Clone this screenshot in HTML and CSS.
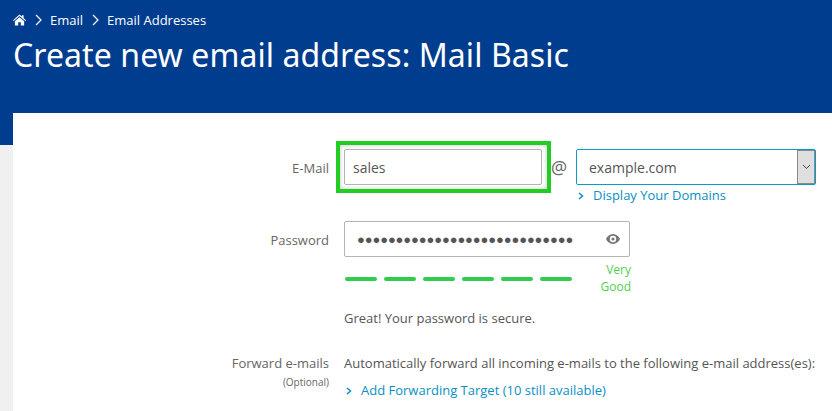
FILE: index.html
```html
<!DOCTYPE html>
<html lang="en">
<head>
  <meta charset="UTF-8" />
  <title>Create new email address: Mail Basic</title>
  <link rel="stylesheet" href="styles.css">
</head>
<body>

  <!-- blue page header -->
  <div class="header">
    <div class="crumbs">
      <svg class="home" viewBox="0 0 14 12" width="13" height="12"><path d="M7 0 L9.6 2.3 V1 H11.4 V3.9 L14 6.2 L13.2 7 L7 1.7 L0.8 7 L0 6.2 Z M2 7.3 L7 3 L12 7.3 V12 H8.4 V8.4 H5.6 V12 H2 Z" fill="#fff"/></svg>
      <svg class="sep" viewBox="0 0 7 12" width="7" height="12"><path d="M1 1 L6 6 L1 11" fill="none" stroke="#fff" stroke-width="1.2"/></svg>
      <span>Email</span>
      <svg class="sep" viewBox="0 0 7 12" width="7" height="12"><path d="M1 1 L6 6 L1 11" fill="none" stroke="#fff" stroke-width="1.2"/></svg>
      <span>Email Addresses</span>
    </div>
    <h1>Create new email address: Mail Basic</h1>
  </div>

  <div class="content">
    <div class="row row-email">
      <label class="lbl">E-Mail</label>
      <div class="email-fields">
        <div class="mail-wrap">
          <input class="input input-mail" type="text" value="sales" />
        </div>
        <span class="at">@</span>
        <div class="domain-col">
          <div class="select">
            <span class="select-text">example.com</span>
            <span class="select-btn">
              <svg viewBox="0 0 9 6" width="9" height="6"><path d="M1 1 L4.5 4.5 L8 1" fill="none" stroke="#444" stroke-width="1"/></svg>
            </span>
          </div>
          <a class="link link-domains" href="#"><svg class="chev" viewBox="0 0 6 8" width="6" height="8"><path d="M1 1 L4.5 4 L1 7" fill="none" stroke="#0a8fc4" stroke-width="1.5"/></svg>Display Your Domains</a>
        </div>
      </div>
    </div>

    <div class="row row-pass">
      <label class="lbl">Password</label>
      <div class="pass-col">
        <div class="input pass-box">
          <span class="dots">&#9679;&#9679;&#9679;&#9679;&#9679;&#9679;&#9679;&#9679;&#9679;&#9679;&#9679;&#9679;&#9679;&#9679;&#9679;&#9679;&#9679;&#9679;&#9679;&#9679;&#9679;&#9679;&#9679;&#9679;&#9679;&#9679;&#9679;&#9679;</span>
          <svg class="eye" viewBox="0 0 14 10" width="14" height="10"><path fill-rule="evenodd" d="M7 0 C10.2 0 12.8 2.2 14 5 C12.8 7.8 10.2 10 7 10 C3.8 10 1.2 7.8 0 5 C1.2 2.2 3.8 0 7 0 Z M7 1.8 A3.2 3.2 0 1 0 7 8.2 A3.2 3.2 0 1 0 7 1.8 Z M7 3.4 A1.6 1.6 0 1 1 7 6.6 A1.6 1.6 0 1 1 7 3.4 Z" fill="#777"/></svg>
        </div>
        <div class="strength">
          <div class="bars">
            <i></i><i></i><i></i><i></i><i></i><i></i>
          </div>
          <div class="strength-text">Very<br>Good</div>
        </div>
        <p class="note">Great! Your password is secure.</p>
      </div>
    </div>

    <div class="row row-forward">
      <div class="lbl">
        Forward e-mails
        <small>(Optional)</small>
      </div>
      <div>
        <div class="forward-text">Automatically forward all incoming e-mails to the following e-mail address(es):</div>
        <a class="link link-forward" href="#"><svg class="chev" viewBox="0 0 6 8" width="6" height="8"><path d="M1 1 L4.5 4 L1 7" fill="none" stroke="#0a8fc4" stroke-width="1.5"/></svg>Add Forwarding Target (10 still available)</a>
      </div>
    </div>
  </div>

</body>
</html>
```

FILE: styles.css
```css
html, body {
  margin: 0;
  padding: 0;
  height: 411px;
  overflow: hidden;
}
body {
  background: #f0f0f0;
  font-family: 'Open Sans', sans-serif;
  font-size: 13px;
  color: #555;
}

/* header */
.header {
  background: #003d8f;
  height: 145px;
  color: #fff;
  padding: 12px 0 0 13px;
  box-sizing: border-box;
}
.crumbs {
  display: flex;
  align-items: center;
  height: 16px;
  font-size: 13px;
}
.home {
  margin-right: 9px;
}
.sep {
  margin-right: 8px;
}
.crumbs span {
  margin-right: 9px;
}
.header h1 {
  margin: 6px 0 0;
  font-family: 'Noto Sans', sans-serif;
  font-size: 32px;
  line-height: 42px;
  font-weight: 400;
  letter-spacing: 0.08px;
}

/* white panel */
.content {
  background: #fff;
  margin: -32px 0 0 13px;
  height: 298px;
  padding-top: 36px;
  box-sizing: border-box;
}
.row {
  display: grid;
  grid-template-columns: 316px 1fr;
  column-gap: 15px;
}
.lbl {
  text-align: right;
  line-height: 38px;
  font-size: 13px;
  color: #666;
}
.lbl small {
  display: block;
  font-size: 10px;
  line-height: 14px;
}
.input {
  box-sizing: border-box;
  height: 36px;
  border: 1px solid #b4b4b4;
  border-radius: 2px;
  background: #fff;
  font-family: 'Open Sans', sans-serif;
  font-size: 14px;
  color: #555;
}

/* email row */
.email-fields {
  display: flex;
  align-items: flex-start;
}
.mail-wrap {
  position: relative;
  height: 36px;
}
/* green highlight drawn over the screenshot */
.mail-wrap::after {
  content: "";
  position: absolute;
  inset: -8px -9px -8px -8px;
  border: 4px solid #22cc22;
  box-shadow: inset 0 0 4px rgba(0, 0, 0, 0.25);
  pointer-events: none;
}
.input-mail {
  display: block;
  width: 198px;
  padding: 0 8px;
  outline: none;
}
.at {
  width: 34px;
  text-align: center;
  font-size: 18px;
  line-height: 36px;
  color: #666;
}
.domain-col {
  width: 240px;
}
.select {
  display: flex;
  height: 36px;
  box-sizing: border-box;
  border: 1px solid #0a9bc9;
  border-radius: 2px;
  font-size: 14px;
}
.select-text {
  flex: 1;
  padding-left: 12px;
  line-height: 36px;
}
.select-btn {
  width: 16px;
  display: flex;
  align-items: center;
  justify-content: center;
  background: #dfdfdf;
  border: 1px solid #888;
}
.link {
  display: block;
  color: #0a8fc4;
  text-decoration: none;
  font-size: 13px;
  line-height: 18px;
}
.link-domains {
  margin-top: 1px;
}
.chev {
  margin: 0 9px 0 2px;
}

/* password row */
.row-pass {
  margin-top: 17px;
}
.pass-box {
  width: 286px;
  display: flex;
  align-items: center;
  justify-content: space-between;
  padding: 0 9px 0 12px;
}
.dots {
  font-size: 13px;
  letter-spacing: -0.13px;
  color: #555;
}
.strength {
  width: 287px;
  display: flex;
  justify-content: space-between;
  margin-top: 4px;
}
.bars {
  display: flex;
  gap: 7px;
  padding: 16px 0 0 1px;
}
.bars i {
  display: block;
  width: 32px;
  height: 4px;
  border-radius: 2px;
  background: #2ecc4f;
}
.strength-text {
  text-align: right;
  font-size: 12px;
  line-height: 17px;
  color: #4fd04f;
}
.note {
  margin: 14px 0 0;
  line-height: 18px;
  font-size: 13px;
}

/* forward row */
.row-forward {
  margin-top: 27px;
}
.row-forward .lbl {
  line-height: 18px;
}
.row-forward .lbl small {
  margin-top: 3px;
}
.forward-text {
  line-height: 18px;
}
.link-forward {
  margin-top: 9px;
}
```
